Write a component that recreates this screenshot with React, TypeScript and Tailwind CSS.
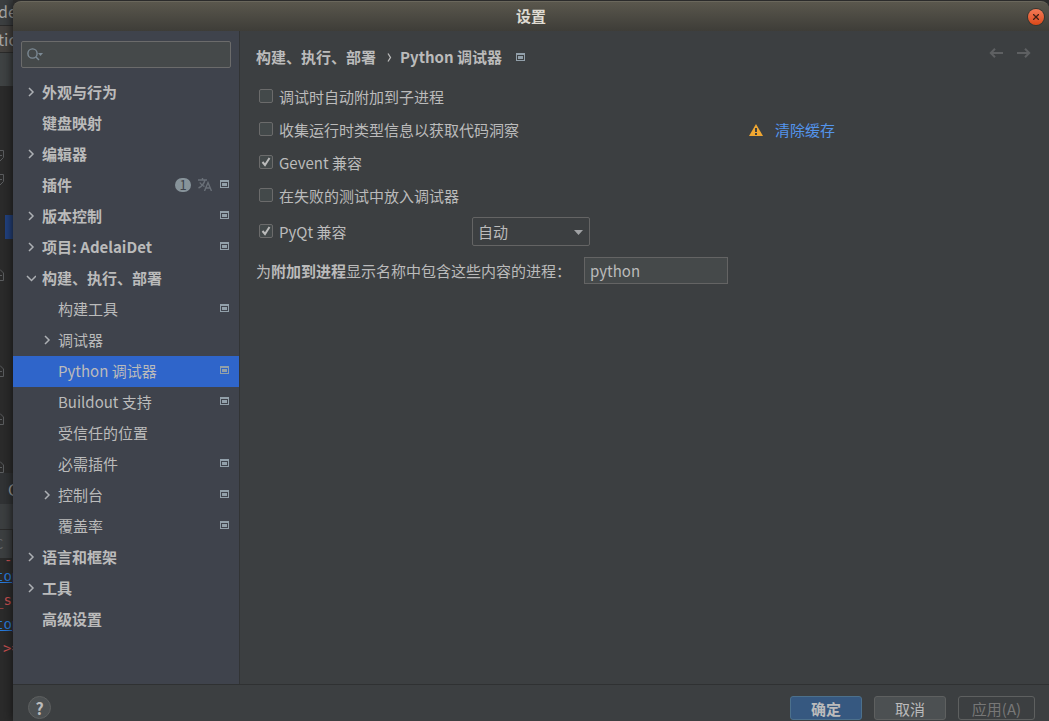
import type { ReactNode } from "react";

type Item = {
  label: string;
  arrow?: "right" | "down";
  child?: boolean;
  project?: boolean;
  selected?: boolean;
  updates?: number;
};

const items: Item[] = [
  { label: "外观与行为", arrow: "right" },
  { label: "键盘映射" },
  { label: "编辑器", arrow: "right" },
  { label: "插件", project: true, updates: 1 },
  { label: "版本控制", arrow: "right", project: true },
  { label: "项目: AdelaiDet", arrow: "right", project: true },
  { label: "构建、执行、部署", arrow: "down" },
  { label: "构建工具", child: true, project: true },
  { label: "调试器", child: true, arrow: "right" },
  { label: "Python 调试器", child: true, project: true, selected: true },
  { label: "Buildout 支持", child: true, project: true },
  { label: "受信任的位置", child: true },
  { label: "必需插件", child: true, project: true },
  { label: "控制台", child: true, arrow: "right", project: true },
  { label: "覆盖率", child: true, project: true },
  { label: "语言和框架", arrow: "right" },
  { label: "工具", arrow: "right" },
  { label: "高级设置" },
];

const Chevron = ({ dir }: { dir: "right" | "down" }) => (
  <svg width="10" height="10" viewBox="0 0 10 10" fill="none" stroke="#adb0b4" strokeWidth="1.5">
    <path d={dir === "right" ? "M3 1 7 5 3 9" : "M1 3 5.500 7.500 10 3"} />
  </svg>
);

const ProjectIcon = () => (
  <svg width="9" height="8" viewBox="0 0 9 8" className="block shrink-0" shapeRendering="crispEdges">
    <path fill="#92a0aa" fillRule="evenodd" d="M0 0h9v8H0zM1 2v5h7V2z" />
    <path fill="#92a0aa" d="M2 3h5v3H2z" />
  </svg>
);

const TranslateIcon = () => (
  <svg width="14" height="13" viewBox="0 0 14 13" fill="none" stroke="#6a7078" strokeWidth="1.4">
    <path d="M0 2h9M4.500 0v2M1.800 4.500C3 6.500 5 8 6.500 8.500M7 2C6 6 3.500 8.500.500 10" />
    <path d="M6.500 13 10 4.500 13.500 13M7.500 10h5" />
  </svg>
);

const Row = ({ item }: { item: Item }) => (
  <li>
    <button
      className={`flex h-[31px] w-full items-center pr-[10px] pb-[2px] text-left ${
        item.child ? "pl-7" : "pl-3 font-bold"
      } ${item.selected ? "bg-[#2f65ca]" : ""}`}
    >
      <span className="flex w-[17px] shrink-0 pl-px">{item.arrow && <Chevron dir={item.arrow} />}</span>
      <span className="flex-1 whitespace-nowrap">{item.label}</span>
      {item.updates && (
        <span className="mr-2 flex items-center gap-[7px]">
          <span className="flex h-[14px] w-4 items-center justify-center rounded-full bg-[#87939a] text-[13px] leading-[14px] font-normal text-[#3f434c]">
            {item.updates}
          </span>
          <TranslateIcon />
        </span>
      )}
      {item.project && <span className="pb-[2px]"><ProjectIcon /></span>}
    </button>
  </li>
);

const Checkbox = ({ children, checked }: { children: ReactNode; checked?: boolean }) => (
  <label className="flex items-center gap-[6px] pl-[3px]">
    <input
      type="checkbox"
      defaultChecked={checked}
      className="peer mb-[2px] size-[14px] appearance-none rounded-[2px] border border-[#6b6b6b] bg-[#43494a]"
    />
    <svg
      viewBox="0 0 14 14"
      className="pointer-events-none mb-[2px] -ml-5 hidden size-[14px] peer-checked:block"
      fill="none"
      stroke="#bbbbbb"
      strokeWidth="2"
    >
      <path d="M3.500 7 6 10 10.500 3" />
    </svg>
    <span>{children}</span>
  </label>
);

const Fold = ({ end }: { end?: boolean }) => (
  <svg width="5" height="12" viewBox="0 0 5 12" fill="none" stroke="#5b5d5f">
    <path d={end ? "M0 .500 3.500 4v7.500H0M0 6.500h2" : "M0 .500h3.500v7L0 11M0 5.500h2"} />
  </svg>
);

// slice of the editor window that stays visible behind the dialog
const Editor = () => (
  <div className="w-[13px] shrink-0 overflow-hidden bg-[#2b2b2b] text-[16px] whitespace-nowrap text-[#a9a9a9]">
    <div className="flex h-[26px] items-center border-b border-[#2b2b2b] bg-[#3c3f41] pb-1">
      <span className="-ml-[2px]">del</span>
    </div>
    <div className="flex h-[27px] items-center border-b border-[#2b2b2b] bg-[#45423f]">
      <span className="-ml-[2px]">tion</span>
    </div>
    <div className="h-[33px] bg-[#3f4344]" />
    <div className="h-[129px] pt-16">
      <Fold />
      <div className="h-3" />
      <Fold />
    </div>
    <div className="ml-[5px] h-6 bg-[#214283]" />
    <div className="h-[234px] pt-[30px]">
      <Fold end />
      <div className="h-[84px]" />
      <Fold end />
      <div className="h-9" />
      <Fold end />
      <div className="h-9" />
      <Fold end />
    </div>
    <div className="flex h-[31px] items-center bg-[#313335] pl-2">C</div>
    <div className="h-[26px] border-b border-[#2b2b2b] bg-[#3c3f41]" />
    <div className="flex h-[28px] items-center border-r border-[#2b2b2b] bg-[#3c3f41] text-[13px] text-[#606366]">
      <span className="-ml-[5px]">C</span>
    </div>
    <div className="font-['DejaVu_Sans_Mono','Liberation_Mono',monospace] text-[14px] leading-6 text-[#d25252]">
      <div className="h-[6px] pl-1 leading-1">-</div>
      <div className="-ml-[5px] text-[#287bde] underline">top</div>
      <div className="-ml-[5px]">_si</div>
      <div className="-ml-[5px] text-[#287bde] underline">top</div>
      <div className="pl-[3px]">&gt;=</div>
    </div>
  </div>
);

export default function App() {
  return (
    <div className="flex h-screen overflow-hidden bg-[#2b2b2b] font-['Noto_Sans_CJK_SC',sans-serif] text-[15px] leading-5 text-[#bbbbbb]">
      <Editor />
      <div className="flex min-w-0 flex-1 flex-col pt-px shadow-[0_0_10px_#111]">
        <header className="flex h-[30px] shrink-0 items-center rounded-t-lg border-t border-[#6a675c] bg-linear-to-b from-[#5a574d] to-[#3e3d38] pr-[5px] pl-[21px]">
          <h1 className="flex-1 pb-[2px] text-center text-[15px] font-bold text-[#dfdbd2]">设置</h1>
          <button
            aria-label="关闭"
            className="flex size-4 items-center justify-center rounded-full bg-linear-to-b from-[#f37a55] to-[#dd4814] ring-1 ring-[#37352f]"
          >
            <svg width="6" height="6" viewBox="0 0 6 6" stroke="#402015" strokeWidth="1.3">
              <path d="M0 0 6 6M6 0 0 6" />
            </svg>
          </button>
        </header>

        <main className="flex min-h-0 flex-1">
          <nav className="w-[227px] shrink-0 border-r border-[#323435] bg-[#3f434c] pt-[10px]">
            <div className="mx-2 mb-[9px] flex h-[27px] items-center rounded-[2px] border border-[#6b6b6b] bg-[#45494a] pl-[5px]">
              <svg width="17" height="14" viewBox="0 0 17 14" fill="none" stroke="#7c8a95" strokeWidth="1.4">
                <circle cx="5.500" cy="5.500" r="4.600" />
                <path d="m9 9 3 3" />
                <path d="M11 5h5l-2.500 3z" fill="#7c8a95" stroke="none" />
              </svg>
              <input aria-label="搜索" className="min-w-0 flex-1 bg-transparent outline-none" />
            </div>
            <ul>
              {items.map((item) => (
                <Row key={item.label} item={item} />
              ))}
            </ul>
          </nav>

          <section className="min-w-0 flex-1 bg-[#3c3f41] px-4 pt-4">
            <div className="flex h-5 items-center">
              <h2 className="flex items-center font-bold whitespace-nowrap">
                构建、执行、部署
                <svg width="24" height="9" viewBox="0 0 24 9" fill="none" stroke="#bbbbbb" strokeWidth="1.3">
                  <path d="M12 .5 14.500 4.500 12 8.500" />
                </svg>
                Python 调试器
              </h2>
              <span className="ml-[14px]"><ProjectIcon /></span>
              <div className="ml-auto flex gap-3 pr-[2px] pb-2">
                <button aria-label="后退">
                  <svg width="15" height="10" viewBox="0 0 15 10" fill="none" stroke="#5e6062" strokeWidth="2">
                    <path d="M14 5H2M6 .8 1.800 5 6 9.200" />
                  </svg>
                </button>
                <button aria-label="前进">
                  <svg width="15" height="10" viewBox="0 0 15 10" fill="none" stroke="#5e6062" strokeWidth="2">
                    <path d="M1 5h12M9 .8 13.200 5 9 9.200" />
                  </svg>
                </button>
              </div>
            </div>

            <div className="mt-5 flex flex-col gap-[13px]">
              <Checkbox>调试时自动附加到子进程</Checkbox>
              <div className="flex items-center">
                <div className="w-[493px]">
                  <Checkbox>收集运行时类型信息以获取代码洞察</Checkbox>
                </div>
                <svg width="14" height="12" viewBox="0 0 14 12">
                  <path d="M7 0 14 12H0z" fill="#f0a732" />
                  <path d="M6 4h2v4H6zM6 9h2v2H6z" fill="#3c3f41" />
                </svg>
                <a href="#" className="ml-3 text-[#5394ec]">清除缓存</a>
              </div>
              <Checkbox checked>Gevent 兼容</Checkbox>
              <Checkbox>在失败的测试中放入调试器</Checkbox>
            </div>

            <div className="mt-[11px] flex items-center">
              <div className="w-[216px]">
                <Checkbox checked>PyQt 兼容</Checkbox>
              </div>
              <div className="relative">
                <select
                  aria-label="PyQt 兼容"
                  className="block h-[29px] w-[118px] appearance-none rounded-[2px] border border-[#646464] bg-[#3c3f41] pl-[5px]"
                >
                  <option>自动</option>
                </select>
                <svg width="9" height="5" viewBox="0 0 9 5" className="pointer-events-none absolute top-[13px] right-[7px]">
                  <path d="M0 0h9L4.500 5z" fill="#a0a2a4" />
                </svg>
              </div>
            </div>

            <div className="mt-[11px] flex items-center gap-[13px]">
              <label htmlFor="filter" className="w-[315px] whitespace-nowrap">
                为<b>附加到进程</b>显示名称中包含这些内容的进程：
              </label>
              <input
                id="filter"
                defaultValue="python"
                className="h-[27px] w-36 border border-[#646464] bg-[#45494a] px-[5px]"
              />
            </div>
          </section>
        </main>

        <footer className="flex h-[37px] shrink-0 items-start gap-3 border-t border-[#2f3132] bg-[#3c3f41] pt-[11px] pr-[14px] pl-[15px]">
          <button className="mr-auto flex size-[23px] items-center justify-center rounded-full border border-[#5e6060] bg-[#4c5052] text-[16px] font-bold">
            ?
          </button>
          <button className="h-6 w-[72px] rounded-[3px] border border-[#4c708c] bg-[#365880] pt-[2px] font-bold">确定</button>
          <button className="h-6 w-[72px] rounded-[3px] border border-[#5e6060] bg-[#4c5052] pt-[2px]">取消</button>
          <button disabled className="h-6 w-[77px] rounded-[3px] border border-[#5e6060] pt-[2px] text-[#777777]">
            应用(A)
          </button>
        </footer>
      </div>
    </div>
  );
}
